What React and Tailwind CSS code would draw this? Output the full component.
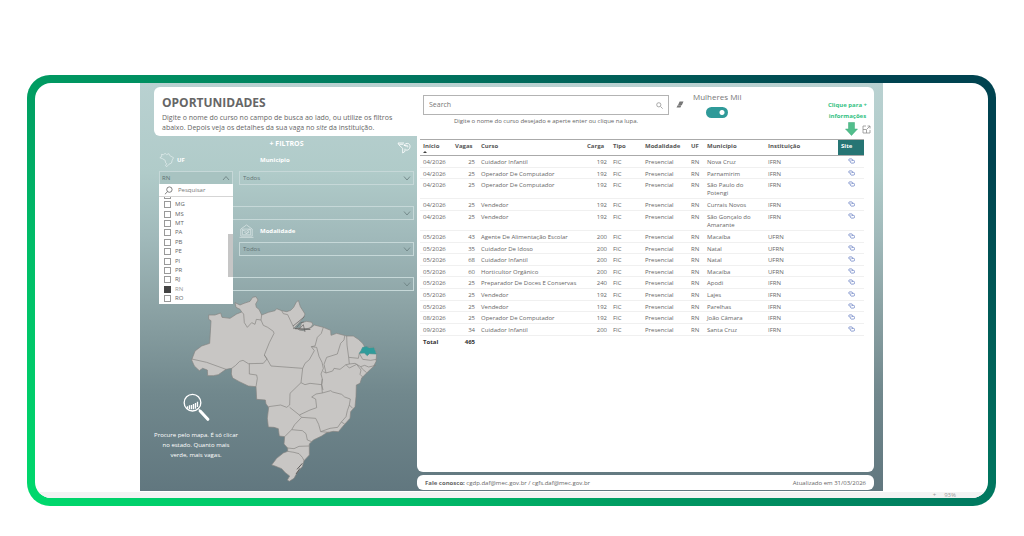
import React, { useState } from "react";

const courses = [
  ["04/2026", 25, "Cuidador Infantil", 192, "Nova Cruz", "IFRN"],
  ["04/2026", 25, "Operador De Computador", 192, "Parnamirim", "IFRN"],
  ["04/2026", 25, "Operador De Computador", 192, "São Paulo do Potengi", "IFRN"],
  ["04/2026", 25, "Vendedor", 192, "Currais Novos", "IFRN"],
  ["04/2026", 25, "Vendedor", 192, "São Gonçalo do Amarante", "IFRN"],
  ["05/2026", 43, "Agente De Alimentação Escolar", 200, "Macaíba", "UFRN"],
  ["05/2026", 35, "Cuidador De Idoso", 200, "Natal", "UFRN"],
  ["05/2026", 68, "Cuidador Infantil", 200, "Natal", "UFRN"],
  ["05/2026", 60, "Horticultor Orgânico", 200, "Macaíba", "UFRN"],
  ["05/2026", 25, "Preparador De Doces E Conservas", 240, "Apodi", "IFRN"],
  ["05/2026", 25, "Vendedor", 192, "Lajes", "IFRN"],
  ["05/2026", 25, "Vendedor", 192, "Parelhas", "IFRN"],
  ["08/2026", 25, "Operador De Computador", 192, "João Câmara", "IFRN"],
  ["09/2026", 34, "Cuidador Infantil", 200, "Santa Cruz", "IFRN"],
];

const states = ["MA", "MG", "MS", "MT", "PA", "PB", "PE", "PI", "PR", "RJ", "RN", "RO"];

const Chevron = ({ up }) => (
  <svg viewBox="0 0 8 8" className="h-2 w-2" fill="none" stroke="#6f8586" strokeWidth="0.9">
    {up ? <path d="M1 6 4 2.5 7 6" /> : <path d="M1 2.5 4 6 7 2.5" />}
  </svg>
);

const LinkIcon = () => (
  <svg viewBox="0 0 20 16" className="h-[6px] w-[7px]" fill="none" stroke="#6d83c4" strokeWidth="2.2">
    <path d="M8 8H5a3 3 0 0 1 0-6h5a3 3 0 0 1 2 5" />
    <path d="M10 6h5a4 4 0 0 1 0 8h-4a3 3 0 0 1-3-5" />
  </svg>
);

const FilterSelect = ({ label }) => (
  <div className="relative h-[14px]">
    <select
      aria-label={label}
      className="block h-full w-full appearance-none border border-[#c6d8d8] bg-transparent pl-[3px] text-[6px] leading-[12px] text-[#5f7273] outline-none"
    >
      <option value="">{label === "Município" || label === "Modalidade" ? "Todos" : ""}</option>
    </select>
    <div className="pointer-events-none absolute right-[3px] top-[3px]">
      <Chevron />
    </div>
  </div>
);

const BrazilMap = () => (
  <svg
    viewBox="150 15 564 564"
    className="h-[188px] w-[188px]"
    fill="none"
    stroke="#858381"
    strokeWidth="2"
    strokeLinejoin="round"
  >
    <path
      fill="#c8c6c4"
      d="M285 38 300 45 312 40 330 34 338 22 348 20 354 30 347 42 349 52 357 58 365 75 385 67 405 62 410 56 425 62 440 65 452 61 461 52 468 38 475 31 481 50 495 72 491 82 480 95 468 108 460 116 480 113 485 98 500 94 516 97 518 104 510 114 478 120 490 122 515 112 523 105 550 112 572 121 573 136 590 130 620 138 640 138 655 148 668 160 675 172 703 172 710 190 708 215 700 230 682 247 665 264 660 280 649 285 648 320 645 350 632 365 630 385 612 405 595 425 580 424 560 428 545 438 520 450 508 462 508 495 492 512 487 530 472 547 462 565 448 574 442 570 449 558 436 548 425 536 405 528 395 525 410 505 430 489 443 484 443 474 432 462 434 440 418 438 415 416 402 412 385 411 382 385 386 352 378 342 376 330 350 328 348 290 325 288 298 275 278 264 274 252 275 235 258 238 235 254 220 257 203 257 202 240 188 235 178 242 163 228 155 210 165 183 185 168 209 160 213 92 206 88 206 75 225 75 242 69 246 82 270 85 290 72 305 66 300 58 288 52Z"
    />
    <path d="M305 66 311 72 313 98 322 112 335 98 345 103 349 88 363 90 365 75" />
    <path d="M363 90 370 106 383 112 400 124 402 130 388 158 373 195 381 207 370 220 325 221 309 211 299 214 286 227 275 235" />
    <path d="M155 207 200 217 258 238" />
    <path d="M373 195 381 207 393 228 488 235" />
    <path d="M328 221 328 252 350 255 352 265 348 290" />
    <path d="M425 62 430 71 443 74 459 108 462 116" />
    <path d="M550 112 544 130 532 142 525 168 514 170 523 182 508 209 495 220 488 235 483 278 450 310 449 345 440 352 422 345 386 350" />
    <path d="M514 170 530 172 537 199 546 217 550 235 543 252 547 267 545 284 510 280 495 284 483 278" />
    <path d="M550 245 558 249 552 223 560 202 592 192 602 160 612 150 614 138" />
    <path d="M558 249 578 243 582 235 600 238 618 224 628 222 626 202 621 165 620 138" />
    <path d="M626 202 655 205 658 190 668 208 692 211 709 208" />
    <path d="M628 222 645 220 662 230 674 226 686 231 708 226" />
    <path d="M662 230 667 237 680 248M618 224 628 234 650 223 663 240 660 253 669 262" />
    <path d="M545 284 547 309 572 302 578 306 605 313 614 321 631 327 628 345 638 355M547 309 528 312 515 321 527 327 530 353 510 360 478 375 449 352" />
    <path d="M628 345 622 362 618 380 604 396 593 412 570 415 542 425 536 403 527 385 485 382 478 375" />
    <path d="M485 382 464 404 455 419 434 440M455 419 487 422 498 431 502 450 515 455" />
    <path d="M443 474 462 476 477 469 507 468M443 484 462 487 477 491 487 502 492 512" />
    <path d="M547 267 545 284 549 300M542 425 567 427M604 396 614 402" />
    <path d="M459 108 474 96 493 80M470 112 482 98 491 96M475 120 490 104 495 126" stroke="#5f5e5d" />
    <path d="M465 116 511 118M471 538 487 520 M468 552 480 535" stroke="#5f5e5d" strokeWidth="3" />
    <path
      fill="#2f9c9b"
      stroke="#4e8f8e"
      d="M658 190 663 182 668 172 680 170 687 174 702 173 709 192 688 191 682 197 673 189Z"
    />
  </svg>
);

const App = () => {
  const [search, setSearch] = useState("");
  const [mulheresMil, setMulheresMil] = useState(true);
  const [selected, setSelected] = useState("RN");

  return (
    <div className="bg-white pb-[30px] pl-[27px] pr-7 pt-[75px] font-['Open_Sans','Noto_Sans',sans-serif] text-[#666]">
      <div className="rounded-[23px] bg-[linear-gradient(35deg,#00d96c_0%,#00bd68_24%,#009861_40%,#007960_61%,#004350_92%)] p-2">
        <div className="overflow-hidden rounded-2xl bg-white">
          <main className="mx-auto flex max-w-[743px] bg-[linear-gradient(180deg,#b9d1d1_0%,#b0cbc9_22%,#a0b9ba_38%,#8da4a6_54%,#71888d_76%,#61777f_100%)]">
            {/* filtros */}
            <section className="w-[277px] shrink-0 pb-2 pt-1">
              <header className="ml-[14px] h-[49px] rounded-l-md bg-white pl-2 pt-[7px]">
                <h1 className="text-xs font-bold leading-[17px]">OPORTUNIDADES</h1>
                <p className="mt-[2px] whitespace-nowrap text-[7px] leading-[10px]">
                  Digite o nome do curso no campo de busca ao lado, ou utilize os filtros
                  <br />
                  abaixo. Depois veja os detalhes da sua vaga no <em>site</em> da instituição.
                </p>
              </header>

              <div className="relative pl-[19px] pr-[3px]">
                <div className="flex h-[13px] items-center justify-center">
                  <h2 className="pt-[2px] text-[7px] font-bold leading-[10px] text-white">+ FILTROS</h2>
                </div>
                <button aria-label="Limpar filtros" className="absolute right-[6px] top-[6px]">
                  <svg viewBox="0 0 40 36" className="h-3 w-[14px]" fill="none" stroke="#fff" strokeWidth="2.500">
                    <path d="M20 3H2l3 6 11 10v14l7-5v-8M6 7h12" />
                    <path d="M26 5c8-3 13 3 12 10s-6 11-13 9M20 10l6-6M20 10l8 3M20 10h8c4 0 5 5 1 6" />
                  </svg>
                </button>

                <div className="grid grid-cols-[74px_1fr] gap-x-[6px]">
                  <div className="relative">
                    <div className="flex h-[22px] items-center gap-[3px]">
                      <svg viewBox="0 0 44 42" className="h-[14px] w-[15px]" fill="none" stroke="#e8f1f1" strokeWidth="2">
                        <path d="M2 14 8 10 7 4 13 5 18 1 22 5 29 2 32 8 43 14 39 22 37 30 29 34 23 41 19 38 23 32 19 29 18 22 10 17Z" />
                      </svg>
                      <span className="text-[6px] font-bold leading-[8px] text-white">UF</span>
                    </div>
                    <button
                      aria-label="UF"
                      className="flex h-[14px] w-full items-center justify-between border border-[#c6d8d8] bg-[#a8c3c1] pl-[2px] pr-[2px] text-[6px] leading-[12px] text-[#5f7273]"
                    >
                      {selected}
                      <Chevron up />
                    </button>
                    <div className="absolute left-0 top-[35px] z-10 h-[120px] w-full overflow-hidden bg-white">
                      <div className="relative z-10 flex h-[13px] items-center gap-[5px] border-b border-[#d5d5d5] bg-white pl-[5px]">
                        <svg viewBox="0 0 10 10" className="h-[9px] w-[9px] shrink-0" fill="none" stroke="#666" strokeWidth="0.900">
                          <circle cx="6" cy="4" r="3" />
                          <path d="M4 6.200 1 9.200" />
                        </svg>
                        <input
                          aria-label="Pesquisar"
                          placeholder="Pesquisar"
                          className="h-2 w-12 bg-transparent text-[6px] leading-[8px] outline-none placeholder:text-[#777]"
                        />
                      </div>
                      <ul className="-mt-[6px] flex h-28 flex-col justify-between pl-[5px]">
                        {states.map((uf) => (
                          <li key={uf}>
                            <label className="flex h-[9px] items-center gap-[4px] text-[6px] leading-[9px]">
                              <input
                                type="checkbox"
                                checked={uf === selected}
                                onChange={() => setSelected(uf)}
                                className="h-[7px] w-[7px] appearance-none border border-[#999] bg-white checked:border-[#444] checked:bg-[#444]"
                              />
                              <span className={uf === selected ? "text-[#999]" : ""}>{uf}</span>
                            </label>
                          </li>
                        ))}
                      </ul>
                      <div className="absolute right-0 top-[50px] h-[43px] w-[5px] bg-[#c6c6c6]" />
                    </div>
                  </div>
                  <div>
                    <div className="flex h-[22px] items-center pl-[21px]">
                      <span className="text-[6px] font-bold leading-[8px] text-white">Município</span>
                    </div>
                    <FilterSelect label="Município" />
                  </div>
                </div>

                <div className="pt-[21px]">
                  <FilterSelect label="Instituição" />
                </div>
                <div className="pl-20">
                  <div className="flex h-[22px] items-center gap-[6px]">
                    <svg viewBox="0 0 46 44" className="h-[14px] w-[15px]" fill="none" stroke="#dfe9e9" strokeWidth="2.200">
                      <path d="M5 38V16L23 3l18 13v22M1 42h44M5 38h36M10 34V16h26v18zM12 20l10 3 12-7M16 26l7 3 9-8M20 31l12-5" />
                    </svg>
                    <span className="text-[6px] font-bold leading-[8px] text-white">Modalidade</span>
                  </div>
                  <FilterSelect label="Modalidade" />
                </div>
                <div className="pt-[21px]">
                  <FilterSelect label="Curso" />
                </div>
              </div>

              {/* mapa */}
              <div className="grid pt-1">
                <div className="pl-[50px] [grid-area:1/1]">
                  <BrazilMap />
                </div>
                <div className="flex w-[112px] flex-col items-center pt-[98px] text-center text-white [grid-area:1/1]">
                  <svg viewBox="0 0 80 84" className="h-7 w-[27px]" fill="none" stroke="#fff">
                    <circle cx="28" cy="29" r="25" strokeWidth="4" />
                    <path d="M46 47 52 54" strokeWidth="3" />
                    <path d="M51 54 74 79" strokeWidth="9" strokeLinecap="round" />
                    <path d="M13 40v7M19 37v12M25 36v13M31 33v16M37 30v17M43 26v16" strokeWidth="4" />
                  </svg>
                  <p className="mt-[9px] whitespace-nowrap text-[6px] font-medium leading-[10px]">
                    Procure pelo mapa. É só clicar
                    <br />
                    no estado. Quanto mais
                    <br />
                    verde, mais vagas.
                  </p>
                </div>
              </div>
            </section>

            {/* resultados */}
            <section className="flex min-w-0 flex-1 flex-col gap-[3px] pb-[1px] pr-[9px] pt-1">
              <div className="flex-1 rounded-b-md rounded-tr-md bg-white pl-[3px] pr-[10px]">
                <div className="flex h-[52px] items-start">
                  <div className="ml-[3px] w-[246px] pt-2">
                    <div className="flex h-5 items-center border border-[#b3b3b3] px-[5px]">
                      <input
                        aria-label="Search"
                        placeholder="Search"
                        value={search}
                        onChange={(e) => setSearch(e.target.value)}
                        className="min-w-0 flex-1 text-[7px] leading-[12px] outline-none placeholder:text-[#777]"
                      />
                      <button aria-label="Buscar">
                        <svg viewBox="0 0 10 10" className="h-[7px] w-[7px]" fill="none" stroke="#999" strokeWidth="1.200">
                          <circle cx="4" cy="4" r="3" />
                          <path d="m6.500 6.500 3 3" />
                        </svg>
                      </button>
                    </div>
                    <p className="mt-[2px] text-center text-[6px] leading-[8px]">
                      Digite o nome do curso desejado e aperte enter ou clique na lupa.
                    </p>
                  </div>
                  <button aria-label="Limpar" className="ml-[7px] mt-[14px]">
                    <svg viewBox="0 0 20 18" className="h-[7px] w-2">
                      <path fill="#777" d="M9 1h10l-4 9H5zM4 11h10l-3 6H1z" />
                    </svg>
                  </button>
                  <label className="ml-[9px] mt-[5px] flex flex-col items-center whitespace-nowrap text-[8px] leading-[10px] text-[#777]">
                    Mulheres Mil
                    <input
                      type="checkbox"
                      role="switch"
                      checked={mulheresMil}
                      onChange={() => setMulheresMil(!mulheresMil)}
                      className="mt-[5px] h-[11px] w-[22px] appearance-none rounded-full bg-[#999] bg-[radial-gradient(circle_at_5px_50%,#fff_3px,transparent_4px)] checked:bg-[#2f9a99] checked:bg-[radial-gradient(circle_at_16px_50%,#fff_2px,transparent_3px)]"
                    />
                  </label>
                  <div className="-mr-[7px] ml-auto flex flex-col items-end pt-[13px] text-[#35c284]">
                    <p className="mr-1 text-center text-[6px] font-bold leading-[11px]">
                      Clique para +
                      <br />
                      informações
                    </p>
                    <div className="flex items-center gap-1">
                      <svg viewBox="0 0 26 28" className="h-[14px] w-[13px]">
                        <path fill="#52be8c" stroke="#3fa878" d="M7 1h12v13h6L13 27 1 14h6z" />
                      </svg>
                      <button aria-label="Expandir">
                        <svg viewBox="0 0 18 18" className="h-[9px] w-[9px]" fill="none" stroke="#888" strokeWidth="1.500">
                          <path d="M8 2H2v14h14v-6M11 2h5v5M16 2l-6 6M2 9h7v7" />
                        </svg>
                      </button>
                    </div>
                  </div>
                </div>

                <table className="h-[209px] w-full table-fixed border-collapse text-left text-[6px] leading-[8px] [&_td]:px-[3px] [&_td]:align-top [&_th]:px-[3px] [&_th]:align-top">
                  <colgroup>
                    <col className="w-[32px]" />
                    <col className="w-[26px]" />
                    <col className="w-[106px]" />
                    <col className="w-[26px]" />
                    <col className="w-[32px]" />
                    <col className="w-[46px]" />
                    <col className="w-[16px]" />
                    <col className="w-[61px]" />
                    <col />
                    <col className="w-[26px]" />
                  </colgroup>
                  <thead>
                    <tr className="h-4 border-y border-[#aaa] text-[#555] [&_th]:pt-[2px]">
                      <th>
                        Início
                        <svg viewBox="0 0 4 2" className="mt-[1px] block h-[2px] w-1">
                          <path fill="#444" d="M0 2 2 0l2 2z" />
                        </svg>
                      </th>
                      <th className="text-right">
                        <span className="pr-[3px]">Vagas</span>
                      </th>
                      <th>Curso</th>
                      <th className="text-right">
                        <span className="pr-[3px]">Carga</span>
                      </th>
                      <th>Tipo</th>
                      <th>Modalidade</th>
                      <th>UF</th>
                      <th>Município</th>
                      <th>Instituição</th>
                      <th className="bg-[#267574] text-white">Site</th>
                    </tr>
                  </thead>
                  <tbody>
                    {courses.map(([inicio, vagas, curso, carga, municipio, inst], i) => (
                      <tr key={i} className="border-b border-[#f0f0f0] [&_td]:pt-[2px]">
                        <td>{inicio}</td>
                        <td className="text-right">{vagas}</td>
                        <td className="whitespace-nowrap">{curso}</td>
                        <td className="text-right">{carga}</td>
                        <td>FIC</td>
                        <td>Presencial</td>
                        <td>RN</td>
                        <td>{municipio}</td>
                        <td>{inst}</td>
                        <td>
                          <a href="#site" aria-label={`Site ${curso}`} className="flex justify-center">
                            <LinkIcon />
                          </a>
                        </td>
                      </tr>
                    ))}
                  </tbody>
                  <tfoot>
                    <tr className="h-[13px] border-t border-[#999] font-bold text-[#333] [&_td]:pt-[2px]">
                      <td>Total</td>
                      <td className="text-right">465</td>
                      <td colSpan={8} />
                    </tr>
                  </tfoot>
                </table>
              </div>
              <footer className="flex h-[15px] items-center justify-between rounded-md bg-white px-2 text-[6px] leading-[8px]">
                <p>
                  <strong>Fale conosco:</strong> cgdp.daf@mec.gov.br / cgfs.daf@mec.gov.br
                </p>
                <p>Atualizado em 31/03/2026</p>
              </footer>
            </section>
          </main>
          <div className="mt-[1px] flex h-[6px] items-end justify-end gap-2 bg-[#f3f3f3] pr-8 text-[6px] leading-[6px] text-[#999]">
            <span>+</span>
            <span>93%</span>
          </div>
        </div>
      </div>
    </div>
  );
};

export default App;
